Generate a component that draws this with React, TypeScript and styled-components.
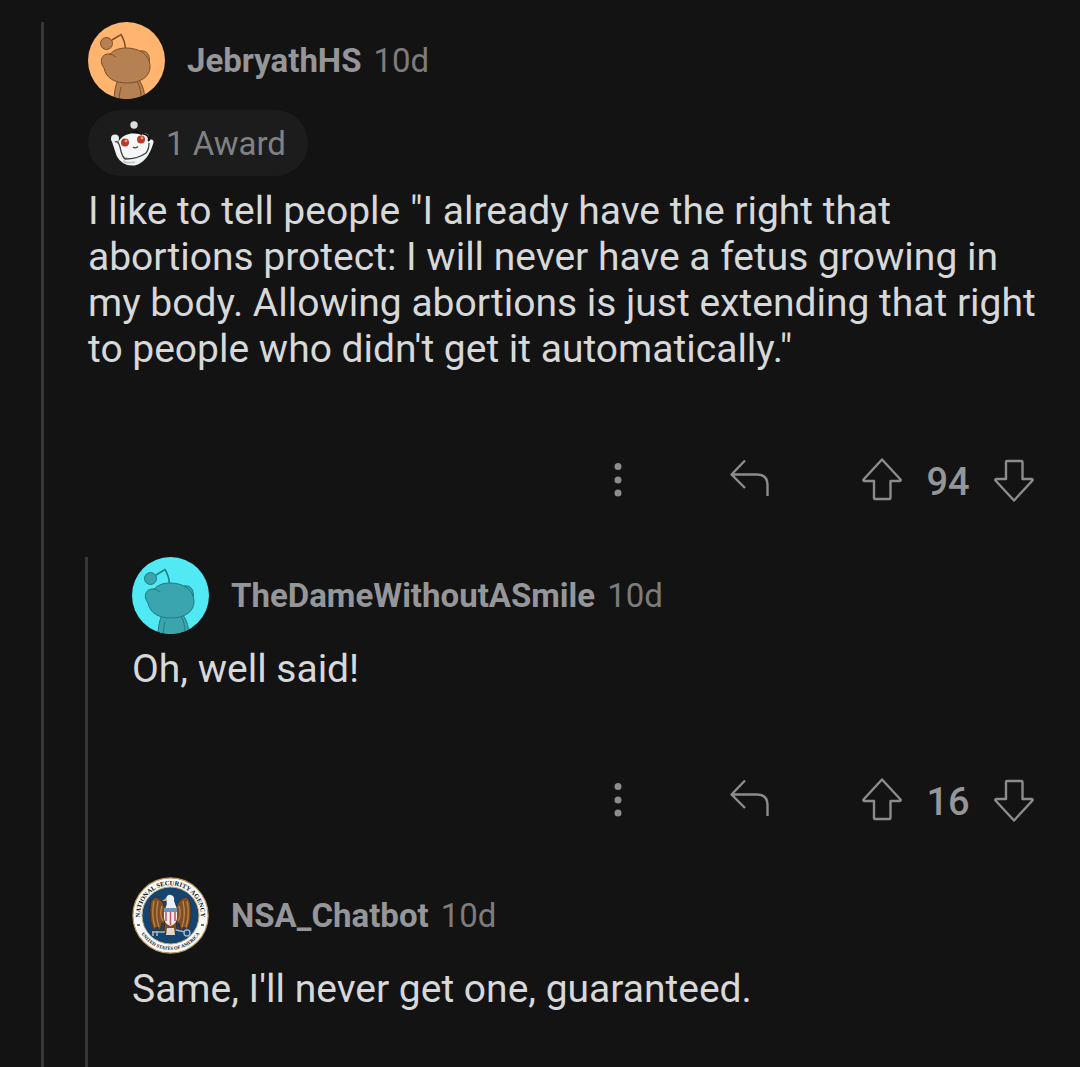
import React from "react";
import styled, { createGlobalStyle } from "styled-components";

const GlobalStyle = createGlobalStyle`
  body {
    margin: 0;
    background: #131313;
    font-family: Roboto, "Noto Sans", sans-serif;
  }
`;

const Page = styled.main`
  box-sizing: border-box;
  display: flex;
  min-height: 100vh;
  padding: 22px 0 0 41px;
`;

const Thread = styled.div`
  flex: 1;
  display: flex;
  flex-direction: column;
  border-left: 3px solid #373737;
`;

const Replies = styled.div`
  flex: 1;
  display: flex;
  margin-left: 41px;
`;

const Comment = styled.article`
  display: flex;
  flex-direction: column;
  padding: 0 40px 55px 44px;

  &:last-child {
    padding-bottom: 0;
  }
`;

const Header = styled.header`
  display: flex;
  align-items: center;
  gap: 22px;
  height: 77px;
`;

const Meta = styled.div`
  display: flex;
  gap: 12px;
  font-size: 33px;
  line-height: 40px;
`;

const Author = styled.a`
  color: #949699;
  font-weight: 700;
  text-decoration: none;
`;

const Age = styled.time`
  color: #7c7c7d;
`;

const Award = styled.div`
  align-self: flex-start;
  display: flex;
  align-items: center;
  gap: 12px;
  box-sizing: border-box;
  height: 66px;
  margin-top: 11px;
  padding: 2px 22px 0;
  border-radius: 33px;
  background: #1c1c1c;
  color: #808182;
  font-size: 33px;
  line-height: 40px;
`;

const Body = styled.p`
  margin: 12px 0 86px;
  color: #d6d8d9;
  font-size: 39px;
  line-height: 46px;

  &:last-child {
    margin-bottom: 0;
  }
`;

const Actions = styled.div`
  display: flex;
  align-items: center;
  justify-content: flex-end;
  gap: 92px;
  height: 44px;
  padding-right: 6px;
`;

const Votes = styled.div`
  display: flex;
  align-items: center;
  gap: 24px;
`;

const Score = styled.span`
  min-width: 44px;
  padding-top: 4px;
  color: #949699;
  font-size: 38px;
  font-weight: 500;
  line-height: 40px;
  text-align: center;
`;

const IconButton = styled.button`
  display: flex;
  width: 40px;
  height: 44px;
  padding: 0;
  border: 0;
  background: none;
  color: #8c8c8c;
  cursor: pointer;
`;

const Icon = ({ children }: { children: React.ReactNode }) => (
  <svg width="40" height="44" viewBox="0 0 40 44" fill="none" stroke="currentColor" strokeWidth="2.4" strokeLinejoin="round" aria-hidden="true">
    {children}
  </svg>
);

const Snoo = ({ bg, fill, line }: { bg: string; fill: string; line: string }) => {
  const clip = "snoo" + bg.slice(1);
  return (
    <svg width="77" height="77" viewBox="0 0 77 77" aria-hidden="true">
      <clipPath id={clip}>
        <circle cx="38.5" cy="38.5" r="38.5" />
      </clipPath>
      <g clipPath={`url(#${clip})`} fill={fill} stroke={line} strokeWidth="1">
        <rect width="77" height="77" fill={bg} stroke="none" />
        <path d="M24 18 33 12.500Q37 19 37.500 27" fill="none" strokeWidth="1.500" />
        <circle cx="18.500" cy="21.500" r="6" />
        <path d="M30 58Q26 66 26 80H57Q57 66 51 58Z" />
        <path d="M33 65Q31 72 31 80M49 59Q54 68 53 80" fill="none" />
        <path d="M52 29C58 28 63 32 61 42L55 38Z" />
        <path d="M22 32C13 31 11 40 16 46C18 57 28 61 39 61C52 61 62 55 62 45C62 33 52 26 38 26C31 26 26 28 22 32Z" />
        <path d="M21 32Q25 32 28 35" fill="none" />
      </g>
    </svg>
  );
};

const AwardSnoo = () => (
  <svg width="44" height="46" viewBox="0 0 44 46" aria-hidden="true">
    <path d="M24 12Q25 8 30 13" fill="none" stroke="#080808" strokeWidth="1.600" />
    <circle cx="24" cy="4" r="3.700" fill="#dedede" />
    <path d="M4 19 9 34Q14 43 24 42Q36 39 41 21" fill="none" stroke="#f1f3f3" strokeWidth="5" strokeLinecap="round" strokeLinejoin="round" />
    <path d="M13 38Q24 45 36 33" fill="none" stroke="#f1f3f3" strokeWidth="5" />
    <ellipse cx="23" cy="25" rx="16" ry="12.500" transform="rotate(-8 23 25)" fill="#f6f7f7" />
    <circle cx="5" cy="17.500" r="4" fill="#e9eced" />
    <circle cx="35" cy="16" r="3.600" fill="#e9eced" />
    <path d="M5 21Q8 19 10 26Q12 36 15 38Q28 38 36 32Q39 28 39 22" fill="none" stroke="#3d4346" strokeWidth="1.300" />
    <path d="M33 13Q39 13 39 20" fill="none" stroke="#090909" strokeWidth="1.600" />
    <path d="M13 40Q18 43 25 41" fill="none" stroke="#bcc5c8" strokeWidth="1.500" />
    <circle cx="15" cy="21.500" r="4" fill="#bc3927" />
    <circle cx="31" cy="18.500" r="4" fill="#bc3927" />
    <circle cx="16" cy="20" r="1.400" fill="#f39b79" />
    <circle cx="32" cy="17" r="1.400" fill="#f39b79" />
    <path d="M23 26Q25 28 28 25.500" fill="none" stroke="#42474a" strokeWidth="1.400" />
  </svg>
);

const Seal = () => (
  <svg width="77" height="77" viewBox="0 0 77 77" aria-hidden="true">
    <circle cx="38.500" cy="38.500" r="37.600" fill="#fbfaf5" stroke="#b99a66" strokeWidth="1.200" />
    <circle cx="38.500" cy="38.500" r="28.500" fill="#15456f" stroke="#c2ab7c" strokeWidth="1" />
    <path id="seal-top" d="M9.110 46.370A30.400 30.400 0 1 1 67.900 46.370" fill="none" />
    <path id="seal-bottom" d="M6 50A34.500 34.500 0 0 0 71 50" fill="none" />
    <g fontFamily="Liberation Serif, serif" fontWeight="700" fill="#0b131b" textAnchor="middle">
      <text fontSize="6.500">
        <textPath href="#seal-top" startOffset="50%">NATIONAL SECURITY AGENCY</textPath>
      </text>
      <text fontSize="4.800">
        <textPath href="#seal-bottom" startOffset="50%">UNITED STATES OF AMERICA</textPath>
      </text>
    </g>
    <path d="M5 48h3M69 48h3" stroke="#6a7580" strokeWidth="2" />
    <g fill="#7d4e26" stroke="#3c2415" strokeWidth="0.800">
      <path id="wing" d="M33 31Q30 21 23 20Q18 22 18 32Q17 44 22 54L25 50 28 54 30 46 33 47Z" />
      <path d="M44 31Q47 21 54 20Q59 22 59 32Q60 44 55 54L52 50 49 54 47 46 44 47Z" />
      <path d="M33 43 32 54 36 57H41L45 54 44 43Z" />
    </g>
    <path d="M22 24Q19 37 23 50M26 24Q23 38 27 50M30 29Q27 38 31 44M55 24Q58 37 54 50M51 24Q54 38 50 50M47 29Q50 38 46 44" fill="none" stroke="#bd8548" strokeWidth="1.300" />
    <path d="M33 32Q36 26 34 22Q35 17 39 18Q43 19 42 24L45 32Z" fill="#edf1f3" />
    <path d="M34 21 30 24 35 24Z" fill="#d7a652" />
    <path d="M32 31H45V41Q45 46 38.500 49Q32 46 32 41Z" fill="#f4eeee" />
    <path d="M34 35V44M38.500 35V48M43 35V44" stroke="#c05a6a" strokeWidth="1.600" />
    <path d="M32 31H45V35H32Z" fill="#6c93b8" />
    <path d="M35 51H42L43 58H34Z" fill="#e0d9d0" />
    <path d="M20 55H33M44 53 53 55M21 54v5M25 54v5" fill="none" stroke="#9db6c8" strokeWidth="1.600" />
    <circle cx="55" cy="56" r="3" fill="none" stroke="#9db6c8" strokeWidth="1.400" />
  </svg>
);

const CommentHeader = ({ avatar, author }: { avatar: React.ReactNode; author: string }) => (
  <Header>
    {avatar}
    <Meta>
      <Author href="#">{author}</Author>
      <Age>10d</Age>
    </Meta>
  </Header>
);

const CommentActions = ({ score }: { score: number }) => (
  <Actions>
    <IconButton aria-label="More options">
      <Icon>
        <g fill="currentColor" stroke="none">
          <circle cx="20" cy="8.500" r="3.500" />
          <circle cx="20" cy="22" r="3.500" />
          <circle cx="20" cy="35" r="3.500" />
        </g>
      </Icon>
    </IconButton>
    <IconButton aria-label="Reply">
      <Icon>
        <path d="M15 2.500 1.500 16.500 15 30M1.500 16.500H27C34 16.500 37.500 20 37.500 27V38" />
      </Icon>
    </IconButton>
    <Votes>
      <IconButton aria-label="Upvote">
        <Icon>
          <path d="M20 1.500 38.500 21.500Q39 23 37.500 23H28.500V40Q28.500 41 27.500 41H13Q12 41 12 40V23H2.500Q1 23 1.500 21.500Z" />
        </Icon>
      </IconButton>
      <Score>{score}</Score>
      <IconButton aria-label="Downvote">
        <Icon>
          <path d="M20 42.500 38.500 22.500Q39 21 37.500 21H28.500V4Q28.500 3 27.500 3H13Q12 3 12 4V21H2.500Q1 21 1.500 22.500Z" />
        </Icon>
      </IconButton>
    </Votes>
  </Actions>
);

export default function App() {
  return (
    <>
      <GlobalStyle />
      <Page>
        <Thread>
          <Comment>
            <CommentHeader avatar={<Snoo bg="#ffb470" fill="#b58052" line="#7d5127" />} author="JebryathHS" />
            <Award>
              <AwardSnoo />
              1 Award
            </Award>
            <Body>
              I like to tell people "I already have the right that abortions protect: I will never have a fetus growing
              in my body. Allowing abortions is just extending that right to people who didn't get it automatically."
            </Body>
            <CommentActions score={94} />
          </Comment>
          <Replies>
            <Thread>
              <Comment>
                <CommentHeader
                  avatar={<Snoo bg="#51e9f4" fill="#3aa5ad" line="#217b83" />}
                  author="TheDameWithoutASmile"
                />
                <Body>Oh, well said!</Body>
                <CommentActions score={16} />
              </Comment>
              <Comment>
                <CommentHeader avatar={<Seal />} author="NSA_Chatbot" />
                <Body>Same, I'll never get one, guaranteed.</Body>
              </Comment>
            </Thread>
          </Replies>
        </Thread>
      </Page>
    </>
  );
}
